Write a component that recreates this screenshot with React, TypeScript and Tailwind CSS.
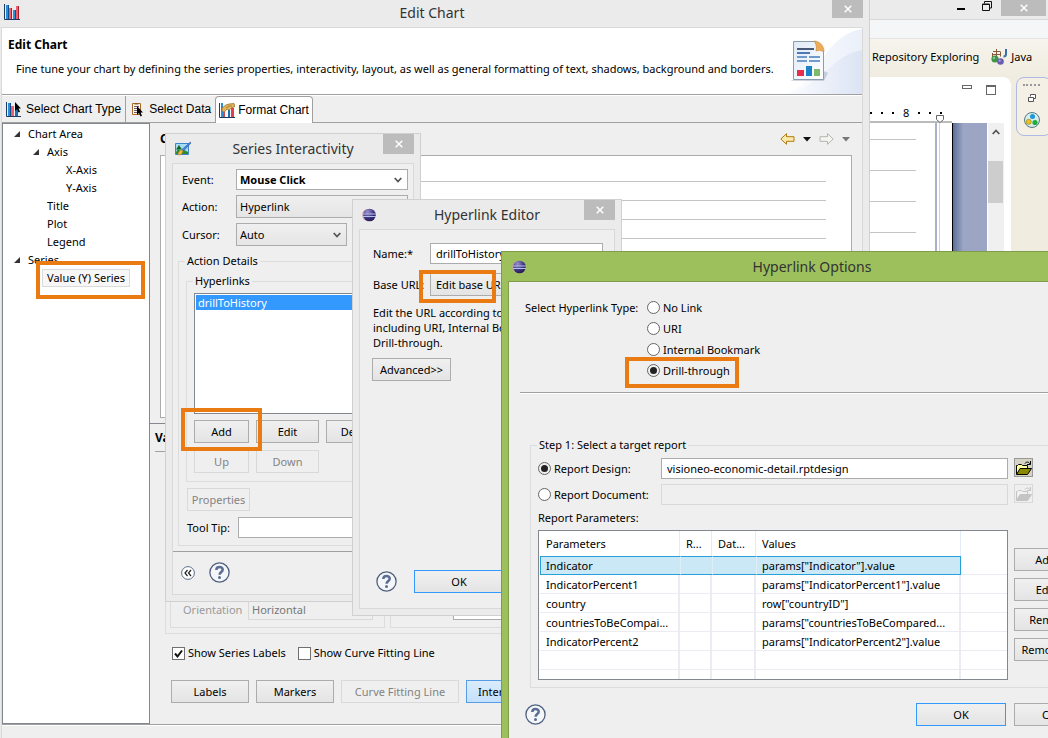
import { useState } from 'react';
import type { ReactNode, ButtonHTMLAttributes, SelectHTMLAttributes } from 'react';
import clsx from 'clsx';

const TREE = [
  { label: 'Chart Area', level: 0, open: true },
  { label: 'Axis', level: 1, open: true },
  { label: 'X-Axis', level: 2 },
  { label: 'Y-Axis', level: 2 },
  { label: 'Title', level: 1 },
  { label: 'Plot', level: 1 },
  { label: 'Legend', level: 1 },
  { label: 'Series', level: 0, open: true },
  { label: 'Value (Y) Series', level: 1, selected: true },
];

const INDENT = ['pl-[11px]', 'pl-[30px]', 'pl-[49px]'];

const PARAMETERS = [
  { name: 'Indicator', value: 'params["Indicator"].value' },
  { name: 'IndicatorPercent1', value: 'params["IndicatorPercent1"].value' },
  { name: 'country', value: 'row["countryID"]' },
  { name: 'countriesToBeCompai...', value: 'params["countriesToBeCompared...' },
  { name: 'IndicatorPercent2', value: 'params["IndicatorPercent2"].value' },
  { name: '', value: '' },
  { name: '', value: '' },
];

const LINK_TYPES = ['No Link', 'URI', 'Internal Bookmark', 'Drill-through'];

/* ---------- icons ---------- */

function ChartBars({ className = 'size-4' }: { className?: string }) {
  return (
    <svg viewBox="0 0 16 16" className={className} aria-hidden="true">
      <path d="M0.5 0v15.5H16" fill="none" stroke="#1f3864" />
      <path d="M2 1h3v14H2z" fill="#2b8fd6" />
      <path d="M4 1h1v14H4z" fill="#0d4f8c" />
      <path d="M5 4h3v11H5z" fill="#f0606c" />
      <path d="M7 4h1v11H7z" fill="#a61c2c" />
      <path d="M9 6h3v9H9z" fill="#2b8fd6" />
      <path d="M11 6h1v9h-1z" fill="#0d4f8c" />
      <path d="M12 2h3v13h-3z" fill="#f0606c" />
      <path d="M14 2h1v13h-1z" fill="#a61c2c" />
    </svg>
  );
}

function ChartTypeIcon() {
  return (
    <svg viewBox="0 0 16 16" className="size-4" aria-hidden="true">
      <path d="M0.5 1v14.5H15" fill="none" stroke="#1f3864" />
      <path d="M2 2h3v13H2z" fill="#2b8fd6" />
      <path d="M4 2h1v13H4z" fill="#0d4f8c" />
      <path d="M5 5h3v10H5z" fill="#f0606c" />
      <path d="M9 8h3v7H9z" fill="#1b6fb5" />
      <path d="M9 1v9l2-2 1.500 3.500 1.500-.7L12.500 7.500H15z" fill="#000" />
    </svg>
  );
}

function DataIcon() {
  return (
    <svg viewBox="0 0 16 16" className="size-4" aria-hidden="true">
      <path d="M2.500 2.500h8v11h-8z" fill="#fff8e8" stroke="#a86a28" />
      <path d="M4.500 2h4v1.500h-4z" fill="#8a5a20" />
      <path d="M4 5.500h5M4 7.500h3M4 9.500h3M4 11.500h3" stroke="#6b5a78" />
      <path d="M7 5v9l2-2 1.500 3.500 1.500-.7-1.500-3.300H13z" fill="#000" />
    </svg>
  );
}

function FormatIcon() {
  return (
    <svg viewBox="0 0 16 16" className="size-4" aria-hidden="true">
      <path d="M0.500 1v14.500H16" fill="none" stroke="#1f3864" />
      <path d="M2 1h2v14H2z" fill="#2b8fd6" />
      <path d="M4 8l2 1v6H4z" fill="#e0404c" />
      <path d="M6 10l3-3v8H6z" fill="#fff" />
      <path d="M9 8h2v7H9z" fill="#1b6fb5" />
      <path d="M12 6h3v9h-3z" fill="#e0404c" />
      <path d="M3 8.500V6l4-3 3-1 5-.5 1 3-3.500 1.500L10 8 8 7l-3 3.500z" fill="#e3b55c" stroke="#8c6420" strokeWidth=".7" />
      <path d="M7 6l3-2 3 0" fill="none" stroke="#8c6420" strokeWidth=".7" />
    </svg>
  );
}

function PictureIcon() {
  return (
    <svg viewBox="0 0 16 16" className="size-4" aria-hidden="true">
      <path d="M.5 2.500h13v11H.5z" fill="#a7dcf8" stroke="#3b86c8" />
      <path d="M1 11l2-3 3 2 3-1 4 2v2H1z" fill="#2e8b2e" />
      <path d="M4 4l3 4.500H1z" fill="#17661f" />
      <path d="M15.500 1L7 8.500 8.500 10 16 2z" fill="#4c86d8" stroke="#2a56a8" strokeWidth=".6" />
      <path d="M3 13c.5-2.500 2-4 4-4l.8 1.500c-.5 2.500-2 3.500-4 3.500z" fill="#f0b93c" stroke="#a8741c" strokeWidth=".5" />
    </svg>
  );
}

function EclipseIcon() {
  return (
    <svg viewBox="0 0 14 14" className="size-3.5" aria-hidden="true">
      <defs>
        <radialGradient id="eclipse" cx="35%" cy="25%" r="80%">
          <stop offset="0" stopColor="#9a90d0" />
          <stop offset=".6" stopColor="#3d3480" />
          <stop offset="1" stopColor="#221a55" />
        </radialGradient>
      </defs>
      <ellipse cx="5.500" cy="7" rx="5.500" ry="6" fill="#c8a0a8" opacity=".8" />
      <circle cx="7.500" cy="7" r="6.300" fill="url(#eclipse)" />
      <path d="M1 6h13M1 8.500h13" stroke="#b4c0ee" />
    </svg>
  );
}

function HelpIcon() {
  return (
    <svg viewBox="0 0 21 21" className="size-[21px]" aria-hidden="true">
      <circle cx="10.500" cy="10.500" r="9.600" fill="#f4f6f9" stroke="#4f607f" strokeWidth="1.300" />
      <path d="M7.300 8c0-4 6.600-3.800 6.400-.3 0 2.300-3.100 2.300-3.100 5" fill="none" stroke="#5b6d92" strokeWidth="2.500" />
      <circle cx="10.500" cy="15.500" r="1.500" fill="#5b6d92" />
    </svg>
  );
}

function CollapseIcon() {
  return (
    <svg viewBox="0 0 14 14" className="size-3.5" aria-hidden="true">
      <circle cx="7" cy="7" r="6.400" fill="#fff" stroke="#5b6d8c" />
      <path d="M6.500 4L4 7l2.500 3M10 4L7.500 7l2.500 3" fill="none" stroke="#222" strokeWidth="1.200" />
    </svg>
  );
}

function OpenFolderIcon({ muted }: { muted?: boolean }) {
  return (
    <svg viewBox="0 0 16 16" className="size-4" aria-hidden="true">
      <path d="M.5 14V5.500h1l1-1h3l1 1h5V8" fill={muted ? '#f2f2f2' : '#ffff9c'} stroke={muted ? '#c4c4c4' : '#000'} />
      <path d="M.5 14.500L4 8.500h11.500l-4 6z" fill={muted ? '#c4c4c4' : '#8a8a00'} stroke={muted ? '#c4c4c4' : '#000'} />
      <path d="M9 3.500c1-2 4-2 5 .5M14.500 1v3.500H11" fill="none" stroke={muted ? '#c4c4c4' : '#000'} />
    </svg>
  );
}

function JavaIcon() {
  return (
    <svg viewBox="0 0 16 16" className="size-4" aria-hidden="true">
      <path d="M2 2.500h7M2 5.500h8M1.500 4v4M9.500 2.500v5M5.500 0v7" fill="none" stroke="#8a5a3c" />
      <circle cx="4" cy="10" r="3.600" fill="#3f9448" />
      <circle cx="3" cy="9" r="1.200" fill="#8ccc90" />
      <circle cx="9.500" cy="12.500" r="3.300" fill="#6a5cae" />
      <circle cx="8.700" cy="11.700" r="1.100" fill="#aaa0dc" />
      <path d="M15 0v5c0 2-1 2.500-2.500 2.500" fill="none" stroke="#3a6ea8" strokeWidth="2" />
    </svg>
  );
}

function PaletteIcon() {
  return (
    <svg viewBox="0 0 16 16" className="size-4" aria-hidden="true">
      <circle cx="8" cy="8" r="7.500" fill="#d8ecec" stroke="#567a80" />
      <circle cx="8.500" cy="4.500" r="2.500" fill="#1c9ad8" />
      <circle cx="4.700" cy="9.800" r="2.600" fill="#e8c020" stroke="#8c7410" strokeWidth=".5" />
      <circle cx="11" cy="10.500" r="2.600" fill="#1fae3c" />
    </svg>
  );
}

function NavArrow({ flip, muted }: { flip?: boolean; muted?: boolean }) {
  return (
    <svg viewBox="0 0 15 12" className={clsx('h-3 w-[15px]', flip && '-scale-x-100')} aria-hidden="true">
      <path
        d="M.8 6L6.500.7v3h7.500v4.600H6.500v3z"
        fill={muted ? '#f4f4f0' : '#fde9a8'}
        stroke={muted ? '#b4b4b0' : '#b07a10'}
      />
    </svg>
  );
}

function Caret({ muted }: { muted?: boolean }) {
  return (
    <svg viewBox="0 0 8 5" className="h-[5px] w-2" aria-hidden="true">
      <path d="M0 0h8L4 4.500z" fill={muted ? '#777' : '#111'} />
    </svg>
  );
}

function ReportBanner() {
  return (
    <svg viewBox="0 0 82 66" className="h-[66px] w-[82px]" aria-hidden="true">
      <defs>
        <linearGradient id="wave" x1="0" x2="1">
          <stop offset="0" stopColor="#ffffff" />
          <stop offset="1" stopColor="#d5dff3" />
        </linearGradient>
        <linearGradient id="sheet" x1="0" y1="0" x2="1" y2="1">
          <stop offset="0" stopColor="#dfe9f6" />
          <stop offset="1" stopColor="#ffffff" />
        </linearGradient>
      </defs>
      <path d="M0 66C38 62 40 8 82 1v65z" fill="url(#wave)" opacity=".5" />
      <path d="M0 66C42 62 48 28 82 22v44z" fill="url(#wave)" opacity=".7" />
      <path d="M10 53h34l4-8-4-2z" fill="#8e9ab0" opacity=".4" />
      <path d="M13.500 13.500h22l8 10v28h-30z" fill="url(#sheet)" stroke="#8a9cb0" />
      <path d="M34 13c5 0 10 4 10 11-3-2-6-2-8-1 1-4 0-8-2-10z" fill="#f0ac55" stroke="#c88530" strokeWidth=".6" />
      <path d="M17 21h17" stroke="#4a5878" strokeWidth="2" />
      <path d="M17 25h13" stroke="#4a7ab8" strokeWidth="2" />
      <path d="M17 29h10M29 29h11M17 33h10M29 33h11" stroke="#6f9ccc" strokeWidth="2" />
      <path d="M17 42h7v6h-7z" fill="#e62e4a" />
      <path d="M26 38h6v10h-6z" fill="#1c82c8" />
      <path d="M34 41h6v7h-6z" fill="#7dba6c" />
    </svg>
  );
}

/* ---------- shared controls ---------- */

const BUTTON_TONES = {
  normal: 'border-[#acacac] from-[#f0f0f0] to-[#e4e4e4]',
  primary: 'border-[#3399ff] from-[#f0f0f0] to-[#e4e4e4]',
  active: 'border-[#569de5] from-[#daecfc] to-[#c4e0fc]',
};

type ButtonProps = ButtonHTMLAttributes<HTMLButtonElement> & { tone?: keyof typeof BUTTON_TONES };

function Button({ tone = 'normal', className, ...props }: ButtonProps) {
  return (
    <button
      type="button"
      className={clsx(
        'h-[23px] shrink-0 border bg-linear-to-b text-center whitespace-nowrap',
        'disabled:border-[#d9d9d9] disabled:bg-none disabled:text-[#838383]',
        BUTTON_TONES[tone],
        className,
      )}
      {...props}
    />
  );
}

function Select({ className, children, ...props }: SelectHTMLAttributes<HTMLSelectElement>) {
  return (
    <div className="grid items-center">
      <select
        className={clsx('col-start-1 row-start-1 w-full appearance-none border border-[#acacac] px-[3px]', className)}
        {...props}
      >
        {children}
      </select>
      <svg viewBox="0 0 8 6" className="pointer-events-none col-start-1 row-start-1 mr-1.5 h-1.5 w-2 justify-self-end" aria-hidden="true">
        <path d="M.7 1L4 4.500 7.300 1" fill="none" stroke="#555" strokeWidth="1.800" />
      </svg>
    </div>
  );
}

function Radio({ name, label, checked, onChange }: { name: string; label: string; checked: boolean; onChange: () => void }) {
  return (
    <label className="flex h-[21px] items-center gap-[3px] whitespace-nowrap">
      <input
        type="radio"
        name={name}
        checked={checked}
        onChange={onChange}
        className="size-[13px] appearance-none rounded-full border border-[#666] bg-white p-[2px] checked:bg-[#222] checked:bg-clip-content"
      />
      {label}
    </label>
  );
}

function Check({ label, defaultChecked }: { label: string; defaultChecked?: boolean }) {
  return (
    <label className="flex items-center gap-[3px]">
      <span className="grid">
        <input type="checkbox" defaultChecked={defaultChecked} className="peer col-start-1 row-start-1 size-[13px] appearance-none border border-[#707070] bg-white" />
        <svg viewBox="0 0 13 13" className="pointer-events-none col-start-1 row-start-1 hidden size-[13px] peer-checked:block" aria-hidden="true">
          <path d="M3 6.500l2.500 3L10 3.500" fill="none" stroke="#111" strokeWidth="2" />
        </svg>
      </span>
      {label}
    </label>
  );
}

function Group({ title, className, children }: { title: string; className?: string; children: ReactNode }) {
  return (
    <fieldset className={clsx('min-w-0 border border-[#dcdcdc] px-[7px]', className)}>
      <legend className="-ml-px px-[2px]">{title}</legend>
      {children}
    </fieldset>
  );
}

function CloseButton({ className }: { className?: string }) {
  return (
    <button type="button" aria-label="Close" className={clsx('flex items-center justify-center bg-[#bcbcbc]', className)}>
      <svg viewBox="0 0 8 8" className="size-2" aria-hidden="true">
        <path d="M.7.7l6.600 6.600M7.300.7L.7 7.300" stroke="#fff" strokeWidth="1.500" />
      </svg>
    </button>
  );
}

type DialogProps = { title: string; icon: ReactNode; className: string; bodyClassName?: string; children: ReactNode };

function Dialog({ title, icon, className, bodyClassName, children }: DialogProps) {
  return (
    <section aria-label={title} className={clsx('absolute flex flex-col border border-[#d0d0d0] bg-[#ebebeb] px-[6px] pb-[6px]', className)}>
      <header className="grid h-[29px] shrink-0 grid-cols-[1fr_auto_1fr]">
        <span className="ml-[3px] self-center">{icon}</span>
        <h2 className="self-center text-sm text-[#333]">{title}</h2>
        <CloseButton className="h-5 w-[31px] justify-self-end" />
      </header>
      <div className={clsx('flex-1 border border-[#d9d9d9] bg-[#efefef]', bodyClassName)}>{children}</div>
    </section>
  );
}

function Highlight({ className }: { className: string }) {
  return <div className={clsx('pointer-events-none absolute border-4 border-[#ea7b13]', className)} />;
}

/* ---------- windows ---------- */

function Workbench() {
  return (
    <main className="ml-[870px] flex h-full flex-col bg-[#f0ece0]">
      <div className="flex h-5 shrink-0 justify-end border-b border-[#d9d9d9] bg-[#ebebeb]">
        <button type="button" aria-label="Minimize" className="flex w-6 justify-center pt-2">
          <span className="h-0.5 w-2 bg-black" />
        </button>
        <button type="button" aria-label="Restore" className="flex w-7 justify-center pt-px">
          <svg viewBox="0 0 10 10" className="size-2.5">
            <path d="M.5 3h7v6.500h-7zM0 3.500h8M2.500 2.500v-2h7V7H8" fill="none" stroke="#111" />
          </svg>
        </button>
        <CloseButton className="mr-0.5 h-4 w-[45px]" />
      </div>
      <div className="h-[19px] shrink-0 border-b border-[#e4e4e4] bg-[#f5f6f8]" />
      <div className="flex h-[38px] shrink-0 items-center gap-3 bg-linear-to-b from-[#f6f4ec] to-[#f0ece0] pb-0.5 pl-[2px] whitespace-nowrap">
        <button type="button">Repository Exploring</button>
        <button type="button" className="flex items-center gap-1">
          <JavaIcon />
          Java
        </button>
      </div>
      <div className="flex flex-1">
        <div className="flex w-[141px] flex-col rounded-tr-lg bg-white">
          <div className="flex h-7 justify-end gap-3.5 pt-2 pr-[15px]">
            <span className="h-1 w-2.5 border border-[#666]" />
            <span className="h-2.5 w-2.5 border border-t-2 border-[#666]" />
          </div>
          <div className="relative flex h-[18px] w-[82px] items-center gap-[9px] border-b-2 border-[#bbb]">
            <i className="size-0.5 bg-black" />
            <i className="size-0.5 bg-black" />
            <i className="size-0.5 bg-black" />
            <span>8</span>
            <i className="size-0.5 bg-black" />
            <i className="size-0.5 bg-black" />
            <i className="size-0.5 bg-black" />
            <svg viewBox="0 0 8 8" className="absolute right-2 -bottom-0.5 size-2">
              <path d="M.5.5h7v4L4 7.500.5 4.500z" fill="#fff" stroke="#666" />
            </svg>
          </div>
          <div className="flex flex-1">
            <div className="flex w-[65px] flex-col gap-[30px] pt-4 pr-[19px]">
              <hr className="border-[#c4c4c4]" />
              <hr className="border-[#c4c4c4]" />
              <hr className="border-[#c4c4c4]" />
              <hr className="border-[#c4c4c4]" />
            </div>
            <div className="w-[5px] border-r border-l-2 border-r-[#b8d8f0] border-l-[#a8b0cc]" />
            <div className="w-[13px] border-r border-black" />
            <div className="w-[34px] bg-linear-to-r from-[#5a7098] to-[#9ca5c4] to-30%" />
            <div className="ml-px w-4 bg-[#f0f0f0]">
              <svg viewBox="0 0 8 6" className="mx-auto mt-1.5 h-1.5 w-2">
                <path d="M.7 5L4 1.500 7.300 5" fill="none" stroke="#555" strokeWidth="1.800" />
              </svg>
              <div className="mt-[26px] h-[42px] w-[15px] bg-[#cdcdcd]" />
            </div>
          </div>
        </div>
        <div className="-mr-1 ml-[5px] flex h-[59px] flex-1 flex-col items-center rounded-lg border border-[#b0b8e4] bg-[#f4f0e6] pr-[5px]">
          <span className="mt-1.5 w-[17px] border-t-2 border-dotted border-[#999]" />
          <svg viewBox="0 0 8 8" className="mt-2 size-2">
            <path d="M2.500 2.500v-2h5v4H6M.5 3.500h5v4h-5z" fill="#fff" stroke="#555" />
          </svg>
          <span className="mt-2.5">
            <PaletteIcon />
          </span>
        </div>
      </div>
    </main>
  );
}

function ChartTree() {
  return (
    <ul role="tree" className="w-[148px] shrink-0 border border-[#828790] bg-white pt-px">
      {TREE.map((item) => (
        <li key={item.label} role="treeitem" aria-selected={!!item.selected} className={clsx('flex h-[18px] items-center', INDENT[item.level])}>
          <svg viewBox="0 0 6 6" className={clsx('mr-[3px] size-1.5', !item.open && 'invisible')} aria-hidden="true">
            <path d="M6 0v6H0z" fill="#333" />
          </svg>
          <span className={clsx('border px-1', item.selected ? 'border-[#dadada] bg-[#f7f7f7]' : 'border-transparent')}>{item.label}</span>
        </li>
      ))}
    </ul>
  );
}

function EditChart() {
  return (
    <section aria-label="Edit Chart" className="absolute inset-y-0 left-0 flex w-[870px] flex-col border-r border-[#d0d0d0] bg-[#ebebeb] pr-[6px] pl-px">
      <header className="grid h-[27px] shrink-0 grid-cols-[1fr_auto_1fr]">
        <span className="ml-[3px] pt-1">
          <ChartBars />
        </span>
        <h1 className="pt-[3px] text-sm text-[#333]">Edit Chart</h1>
        <CloseButton className="h-[18px] w-[31px] justify-self-end" />
      </header>

      <div className="flex min-h-0 flex-1 flex-col border-x border-t border-[#d9d9d9] bg-[#efefef]">
        <div className="flex h-[67px] shrink-0 justify-between border-b border-[#a0a0a0] bg-white">
          <div className="pt-[9px] pl-1.5">
            <h2 className="text-xs font-bold">Edit Chart</h2>
            <p className="mt-2 pl-2 whitespace-nowrap">
              Fine tune your chart by defining the series properties, interactivity, layout, as well as general formatting of text, shadows, background and borders.
            </p>
          </div>
          <ReportBanner />
        </div>

        <div role="tablist" className="flex h-7 shrink-0 border-t border-b border-t-white border-b-[#a0a0a0] font-['Liberation_Sans',sans-serif] text-xs">
          <button type="button" role="tab" className="flex items-center gap-1 border-r border-[#a0a0a0] px-1">
            <ChartTypeIcon />
            Select Chart Type
          </button>
          <button type="button" role="tab" className="flex items-center gap-[3px] px-1">
            <DataIcon />
            Select Data
          </button>
          <button type="button" role="tab" aria-selected="true" className="-mb-px flex items-center gap-[3px] rounded-t border border-b-0 border-[#a0a0a0] bg-white px-[3px]">
            <FormatIcon />
            Format Chart
          </button>
        </div>

        <div className="flex min-h-0 flex-1">
          <ChartTree />
          <div className="flex min-w-0 flex-1 flex-col">
            <div className="flex h-8 shrink-0 items-center justify-between pr-3 pl-2.5">
              <h3 className="text-xs font-bold">Chart Preview</h3>
              <div className="flex items-center gap-2">
                <button type="button" aria-label="Back"><NavArrow /></button>
                <button type="button" aria-label="Back history"><Caret /></button>
                <button type="button" aria-label="Forward"><NavArrow flip muted /></button>
                <button type="button" aria-label="Forward history"><Caret muted /></button>
              </div>
            </div>
            <div className="mx-2.5 flex h-[263px] shrink-0 flex-col gap-[18px] border border-[#acacac] bg-white px-[25px] pt-[25px]">
              <hr className="border-[#c4c4c4]" />
              <hr className="border-[#c4c4c4]" />
              <hr className="border-[#c4c4c4]" />
              <hr className="border-[#c4c4c4]" />
            </div>
            <hr className="mt-[5px] border-[#828790]" />
            <h3 className="mt-1.5 pl-[5px] text-xs font-bold">Value (Y) Series</h3>
            <hr className="mt-[5px] ml-[5px] border-[#a0a0a0]" />

            <div className="flex flex-1 flex-col justify-end px-[15px]">
              <div className="flex flex-1 items-end gap-[5px] border border-t-0 border-[#dcdcdc] px-[4px] pb-[5px]">
                <div className="flex w-[215px] items-center border border-t-0 border-[#dcdcdc] pb-[7px] pl-3">
                  <label htmlFor="orientation" className="w-[65px] text-[#9a9a9a]">Orientation</label>
                  <input id="orientation" disabled defaultValue="Horizontal" className="h-[21px] w-[125px] border border-[#d9d9d9] px-[3px] text-[#777]" />
                </div>
                <div className="flex flex-1 border border-t-0 border-[#dcdcdc] pb-[7px] pl-[62px]">
                  <input aria-label="Series value" className="h-[21px] w-[90px] border border-[#acacac] bg-white" />
                </div>
              </div>
            </div>
            <div className="mt-[11px] flex gap-3 pl-[22px]">
              <Check label="Show Series Labels" defaultChecked />
              <Check label="Show Curve Fitting Line" />
            </div>
            <div className="mt-[19px] mb-[21px] flex gap-[7px] pl-[21px]">
              <Button className="w-[78px]">Labels</Button>
              <Button className="w-[78px]">Markers</Button>
              <Button className="w-[118px]" disabled>Curve Fitting Line</Button>
              <Button tone="active" className="px-[11px]">Interactivity</Button>
            </div>
          </div>
        </div>
        <div className="h-3.5 shrink-0 border-t border-[#a0a0a0]">
          <div className="border-t border-white" />
        </div>
      </div>
    </section>
  );
}

function SeriesInteractivity() {
  return (
    <Dialog title="Series Interactivity" icon={<PictureIcon />} className="top-[133px] left-[165px] w-64">
      <div className="grid grid-cols-[54px_1fr] items-center gap-y-[5px] pt-[5px] pr-[5px] pl-[9px]">
        <label htmlFor="event">Event:</label>
        <Select id="event" className="h-[21px] bg-white font-bold">
          <option>Mouse Click</option>
        </Select>
        <label htmlFor="action">Action:</label>
        <Select id="action" className="h-[23px] bg-linear-to-b from-[#f0f0f0] to-[#e5e5e5]">
          <option>Hyperlink</option>
        </Select>
        <label htmlFor="cursor">Cursor:</label>
        <div className="w-[111px]">
          <Select id="cursor" className="h-[23px] bg-linear-to-b from-[#f0f0f0] to-[#e5e5e5]">
            <option>Auto</option>
          </Select>
        </div>
      </div>

      <Group title="Action Details" className="mx-[5px] mt-[7px] pb-[7px]">
        <Group title="Hyperlinks" className="mt-1 pb-2">
          <ul role="listbox" aria-label="Hyperlinks" className="mt-1 h-[121px] border border-[#828790] bg-white p-px">
            <li role="option" aria-selected="true" className="bg-[#3399ff] px-[2px] leading-[15px] text-white">drillToHistory</li>
          </ul>
          <div className="mt-1.5 grid grid-cols-[55px_63px_63px] gap-[7px] overflow-hidden">
            <Button>Add</Button>
            <Button>Edit</Button>
            <Button>Delete</Button>
            <Button disabled>Up</Button>
            <Button disabled>Down</Button>
          </div>
        </Group>
        <Button disabled className="mt-1.5 ml-px block w-[63px]">Properties</Button>
        <div className="mt-1.5 flex items-center gap-2 pl-px">
          <label htmlFor="tooltip" className="shrink-0">Tool Tip:</label>
          <input id="tooltip" className="h-[21px] min-w-0 flex-1 border border-[#acacac] bg-white" />
        </div>
      </Group>

      <div className="mt-[5px] flex items-center gap-3.5 border-t border-[#a0a0a0] pt-[10px] pb-[11px] pl-2">
        <button type="button" aria-label="Collapse"><CollapseIcon /></button>
        <button type="button" aria-label="Help"><HelpIcon /></button>
      </div>
    </Dialog>
  );
}

function HyperlinkEditor() {
  return (
    <Dialog
      title="Hyperlink Editor"
      icon={<EclipseIcon />}
      className="top-[199px] left-[352px] h-[417px] w-[270px]"
      bodyClassName="flex flex-col justify-between pt-[13px] pr-[11px] pb-[15px] pl-3"
    >
      <div>
        <div className="grid grid-cols-[58px_1fr] items-center gap-y-[9px] whitespace-nowrap">
          <label htmlFor="link-name" className="pl-px">Name:*</label>
          <input id="link-name" defaultValue="drillToHistory" className="h-[21px] border border-[#acacac] bg-white px-[5px]" />
          <span className="pl-px">Base URL:</span>
          <Button className="justify-self-start px-[5px]">Edit base URL...</Button>
        </div>
        <p className="mt-[9px] pl-px leading-[15px] whitespace-nowrap">
          Edit the URL according to type,
          <br />
          including URI, Internal Bookmark,
          <br />
          Drill-through.
        </p>
        <Button className="mt-2 w-[79px]">Advanced&gt;&gt;</Button>
      </div>
      <div className="flex items-center gap-[17px] pl-1">
        <button type="button" aria-label="Help"><HelpIcon /></button>
        <Button tone="primary" className="w-[90px]">OK</Button>
      </div>
    </Dialog>
  );
}

function ParameterTable() {
  return (
    <div className="h-[150px] overflow-hidden border border-[#828790] bg-white pl-px">
      <table className="w-full table-fixed border-separate border-spacing-0 text-left whitespace-nowrap">
        <colgroup>
          <col className="w-[140px]" />
          <col className="w-8" />
          <col className="w-11" />
          <col className="w-[205px]" />
          <col />
        </colgroup>
        <thead>
          <tr className="h-[25px]">
            {['Parameters', 'R...', 'Dat...', 'Values'].map((head) => (
              <th key={head} className="border-r border-[#e2ecf8] pl-1.5 font-normal">{head}</th>
            ))}
            <td />
          </tr>
        </thead>
        <tbody>
          {PARAMETERS.map((param, i) =>
            i === 0 ? (
              <tr key={i} aria-selected="true" className="h-[19px] leading-none">
                <td className="border-y border-l border-[#26a0da] bg-[#cbe8f6] pl-[5px]">{param.name}</td>
                <td className="border-y border-l border-y-[#26a0da] border-l-[#e2eef6] bg-[#cbe8f6]" />
                <td className="border-y border-l border-y-[#26a0da] border-l-[#e2eef6] bg-[#cbe8f6]" />
                <td className="border-y border-r border-l border-y-[#26a0da] border-r-[#26a0da] border-l-[#e2eef6] bg-[#cbe8f6] pl-[5px]">{param.value}</td>
                <td className="border-b border-[#ebebf2]" />
              </tr>
            ) : (
              <tr key={i} className="h-[19px] leading-none">
                <td className="border-r-2 border-b border-[#ebebf2] pl-1.5">{param.name}</td>
                <td className="border-r-2 border-b border-[#ebebf2]" />
                <td className="border-r-2 border-b border-[#ebebf2]" />
                <td className="border-r-2 border-b border-[#ebebf2] pl-1.5">{param.value}</td>
                <td className="border-b border-[#ebebf2]" />
              </tr>
            ),
          )}
        </tbody>
      </table>
    </div>
  );
}

function HyperlinkOptions() {
  const [type, setType] = useState('Drill-through');
  const [target, setTarget] = useState('design');

  return (
    <section aria-label="Hyperlink Options" className="absolute top-[251px] left-[501px] flex w-[622px] flex-col border border-[#7f9c4a] bg-[#9dc05d] px-[6px] pb-[6px]">
      <header className="grid h-[29px] grid-cols-[1fr_auto_1fr] items-center">
        <span className="ml-1">
          <EclipseIcon />
        </span>
        <h2 className="text-sm text-[#333]">Hyperlink Options</h2>
      </header>
      <div className="border border-[#7f9c4a] bg-[#efefef] pb-5">
        <div className="flex pt-[15px] pl-4">
          <span className="w-[122px] pt-[3px]">Select Hyperlink Type:</span>
          <div>
            {LINK_TYPES.map((t) => (
              <Radio key={t} name="link-type" label={t} checked={type === t} onChange={() => setType(t)} />
            ))}
          </div>
        </div>
        <div className="mt-[11px] ml-[11px] border-t border-[#a0a0a0]">
          <div className="border-t border-white" />
        </div>

        <Group title="Step 1: Select a target report" className="mt-[43px] mr-[21px] ml-[21px] pb-[7px]">
          <div className="grid grid-cols-[117px_1fr_72px] gap-x-1.5 gap-y-[5px] pt-[5px]">
            <Radio name="target" label="Report Design:" checked={target === 'design'} onChange={() => setTarget('design')} />
            <input aria-label="Report Design" defaultValue="visioneo-economic-detail.rptdesign" className="h-[21px] border border-[#acacac] bg-white px-[5px]" />
            <button type="button" aria-label="Browse design" className="flex size-[19px] items-center justify-center border border-[#999] bg-[#d6d2c4]">
              <OpenFolderIcon />
            </button>
            <Radio name="target" label="Report Document:" checked={target === 'document'} onChange={() => setTarget('document')} />
            <input aria-label="Report Document" disabled className="h-[21px] border border-[#d9d9d9] bg-[#efefef]" />
            <button type="button" aria-label="Browse document" disabled className="flex size-[19px] items-center justify-center border border-[#d9d9d9]">
              <OpenFolderIcon muted />
            </button>
          </div>
          <p className="mt-[5px] mb-1">Report Parameters:</p>
          <div className="grid grid-cols-[1fr_72px] gap-x-1.5">
            <ParameterTable />
            <div className="flex flex-col gap-[7px] pt-[18px]">
              <Button>Add...</Button>
              <Button>Edit...</Button>
              <Button>Remove</Button>
              <Button>Remove All</Button>
            </div>
          </div>
        </Group>

        <div className="mt-[15px] flex items-center gap-2 pr-[11px] pl-4">
          <button type="button" aria-label="Help" className="mr-auto"><HelpIcon /></button>
          <Button tone="primary" className="w-[90px]">OK</Button>
          <Button className="w-[90px]">Cancel</Button>
        </div>
      </div>
    </section>
  );
}

export default function App() {
  return (
    <div className="relative h-screen overflow-hidden font-['Noto_Sans',sans-serif] text-[11px] leading-4 text-black">
      <Workbench />
      <EditChart />
      <SeriesInteractivity />
      <HyperlinkEditor />
      <HyperlinkOptions />
      <Highlight className="top-[261px] left-[36px] h-[38px] w-[109px]" />
      <Highlight className="top-[408px] left-[181px] h-[43px] w-[81px]" />
      <Highlight className="top-[270px] left-[419px] h-[33px] w-[77px]" />
      <Highlight className="top-[357px] left-[625px] h-[31px] w-[114px]" />
    </div>
  );
}
